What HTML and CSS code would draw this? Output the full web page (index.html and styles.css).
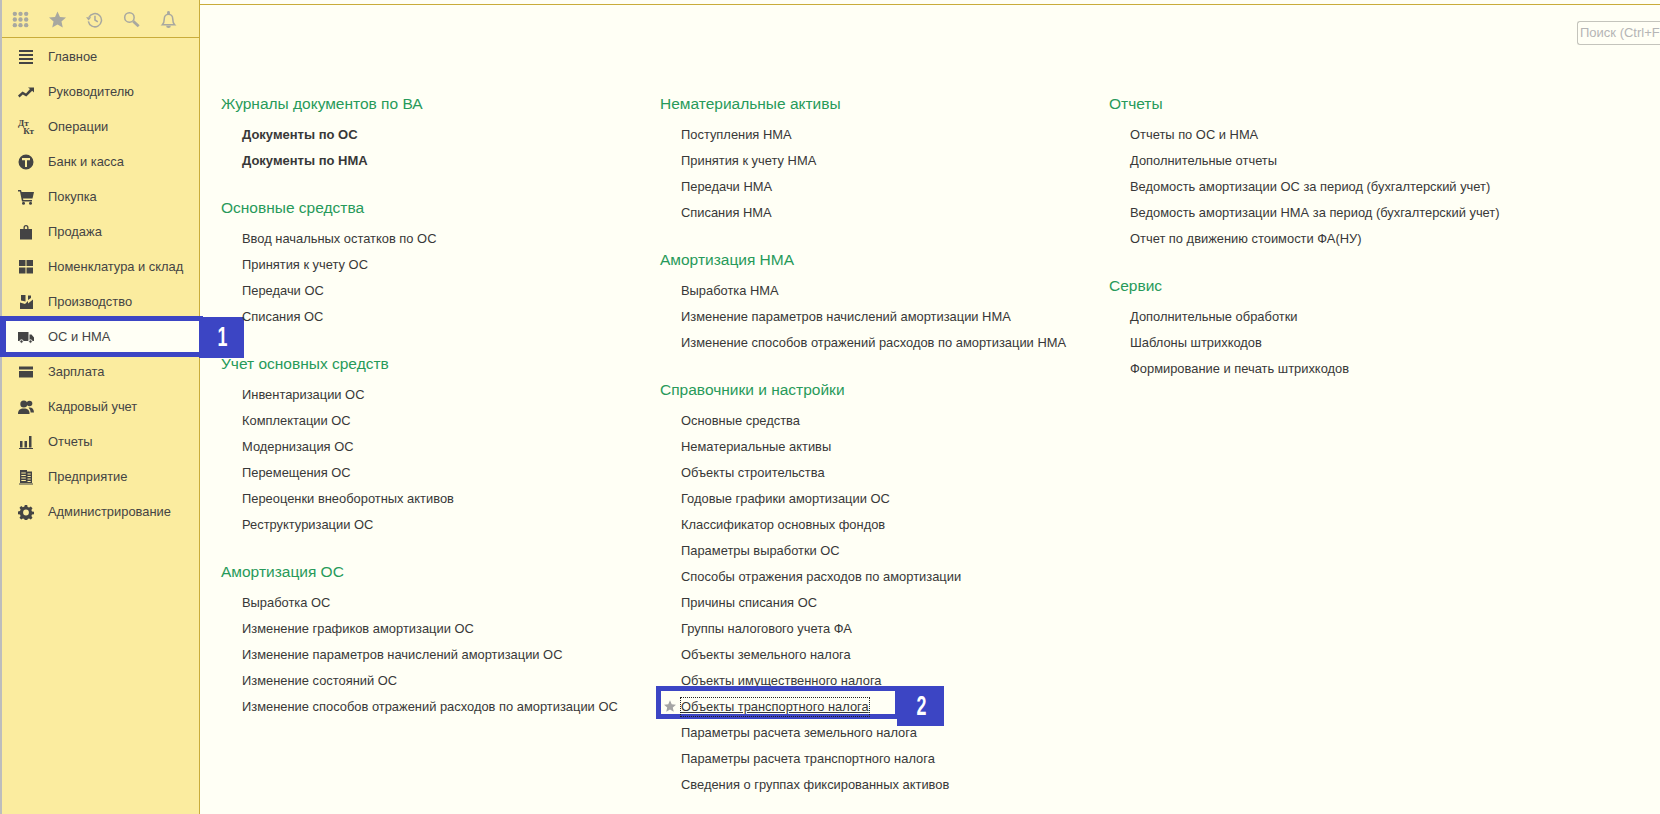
FILE: index.html
```html
<!DOCTYPE html>
<html lang="ru">
<head>
<meta charset="utf-8">
<title>ОС и НМА</title>
<link rel="stylesheet" href="styles.css">
</head>
<body>
<div class="app">
  <aside class="sidebar">
    <div class="toolbar">
      <svg class="tool" viewBox="0 0 18 18"><g class="grey"><circle cx="3" cy="3" r="2.3"/><circle cx="9" cy="3" r="2.3"/><circle cx="15" cy="3" r="2.3"/><circle cx="3" cy="9" r="2.3"/><circle cx="9" cy="9" r="2.3"/><circle cx="15" cy="9" r="2.3"/><circle cx="3" cy="15" r="2.3"/><circle cx="9" cy="15" r="2.3"/><circle cx="15" cy="15" r="2.3"/></g></svg>
      <svg class="tool" viewBox="0 0 18 18"><path class="grey" d="M9 .5l2.600 5.900 6.400.6-4.800 4.200 1.400 6.300L9 14.200l-5.600 3.300 1.400-6.300L0 7l6.400-.6z"/></svg>
      <svg class="tool" viewBox="0 0 18 18"><g class="grey-line"><path d="M3.200 6.500A7 7 0 1 1 2.500 11"/><path d="M9.500 5v4.500l3 2"/></g><path class="grey" d="M0 6.500h5.500L2.800 10z"/></svg>
      <svg class="tool" viewBox="0 0 18 18"><g class="grey-line"><circle cx="6.800" cy="6.800" r="5"/><path d="M10.800 10.800l5.800 5.400" stroke-width="3"/></g></svg>
      <svg class="tool" viewBox="0 0 18 18"><g class="grey-line"><path d="M2.500 14.500c1.500-1.500 2-2.500 2-6 0-3 2-5 4.500-5s4.500 2 4.500 5c0 3.500.5 4.500 2 6z"/></g><path class="grey" d="M7.500 1.500a1.500 1.500 0 0 1 3 0v2h-3zM6.500 15.500h5a2.500 2.500 0 0 1-5 0z"/></svg>
    </div>
    <ul class="nav">
      <li class="nav-item"><svg class="ico" viewBox="0 0 16 16"><path d="M1 1h14v2H1zM1 5h14v2H1zM1 9h14v2H1zM1 13h14v2H1z"/></svg>Главное</li>
      <li class="nav-item"><svg class="ico" viewBox="0 0 16 16"><path d="M0 11.500l4.500-4 3.500 2 4-4.500-2-1.500h6v5l-1.800-1.800L8.300 12.500l-3.500-2L1.500 13.500z"/></svg>Руководителю</li>
      <li class="nav-item"><span class="dtkt"><b>Дт</b><b class="kt">Кт</b></span>Операции</li>
      <li class="nav-item"><svg class="ico" viewBox="0 0 16 16"><path fill-rule="evenodd" d="M8 .5a7.500 7.500 0 1 1 0 15 7.500 7.500 0 0 1 0-15zM4 4v2.300h3V13h2V6.300h3V4z"/></svg>Банк и касса</li>
      <li class="nav-item"><svg class="ico" viewBox="0 0 16 16"><path d="M0 1h3l.6 2H16l-1.500 6.500H5l.3 1.500H14v1.500H4L2 2.500H0z"/><circle cx="5.500" cy="14.300" r="1.500"/><circle cx="12.500" cy="14.300" r="1.500"/></svg>Покупка</li>
      <li class="nav-item"><svg class="ico" viewBox="0 0 16 16"><path fill-rule="evenodd" d="M2 5h3.500V3.500a2.500 2.500 0 0 1 5 0V5H14v10.500H2zM6.800 5h2.400V3.500a1.200 1.200 0 0 0-2.400 0z"/></svg>Продажа</li>
      <li class="nav-item"><svg class="ico" viewBox="0 0 16 16"><path d="M1 1h6.500v6H1zM8.500 1H15v6H8.500zM1 8.500h6.500v6H1zM8.500 8.500H15v6H8.500z"/></svg>Номенклатура и склад</li>
      <li class="nav-item"><svg class="ico" viewBox="0 0 16 16"><path d="M2 15V8.500l5 1.500 3-3v2.500l5-4V15z"/><path d="M3 1h4.500v6.500L3 6.500zM10 1.500h3v2.500l-3 2z"/></svg>Производство</li>
      <li class="nav-item is-active">
        <svg class="ico" viewBox="0 0 16 16"><path d="M0 3h10.500v9H0zM11.500 5.500h2L16 8.500V12h-4.500z"/><circle cx="3.500" cy="12.500" r="1.700" class="hole"/><circle cx="12.500" cy="12.500" r="1.700" class="hole"/></svg>ОС и НМА
        <span class="frame frame-nav"></span>
        <span class="tag tag-nav"><span class="digit">1</span></span>
      </li>
      <li class="nav-item"><svg class="ico" viewBox="0 0 16 16"><path d="M1 2.500h14v3H1zM1 7h14v6.500H1z"/></svg>Зарплата</li>
      <li class="nav-item"><svg class="ico" viewBox="0 0 16 16"><circle cx="5.800" cy="5" r="3.500"/><path d="M0 15c0-4 2-5.500 5.800-5.500s5.800 1.500 5.800 5.500z"/><circle cx="11.500" cy="4.500" r="2.800"/><path d="M10.500 8.500c3.500-.5 5.500 1.500 5.500 5h-3.400c0-2-.8-3.500-2.100-5z"/></svg>Кадровый учет</li>
      <li class="nav-item"><svg class="ico" viewBox="0 0 16 16"><path d="M2 7h2.500v6.500H2zM6.500 7h2.500v6.500H6.500zM11 2h2.500v11.500H11zM1 14h14v1H1z"/></svg>Отчеты</li>
      <li class="nav-item"><svg class="ico" viewBox="0 0 16 16"><path fill-rule="evenodd" d="M2 1h7v1.500h5V14H2zM3.300 3.500v1h4.500v-1zM3.300 6v1h4.500V6zM3.300 8.500v1h4.500v-1zM3.300 11v1h4.500v-1zM9.500 4.500v1h3.200v-1zM9.500 7v1h3.200V7zM9.500 9.500v1h3.200v-1zM9.500 12v1h3.200v-1zM1 14.500h14v1H1z"/></svg>Предприятие</li>
      <li class="nav-item"><svg class="ico" viewBox="0 0 16 16"><path fill-rule="evenodd" d="M6.800 1h2.400l.4 2 1.500.6 1.700-1.100 1.700 1.700-1.100 1.700.6 1.500 2 .4v2.400l-2 .4-.6 1.500 1.100 1.700-1.700 1.700-1.700-1.100-1.500.6-.4 2H6.800l-.4-2-1.500-.6-1.700 1.100-1.700-1.700 1.100-1.700-.6-1.500-2-.4V7.400l2-.4.6-1.500-1.100-1.700 1.700-1.700 1.700 1.100 1.500-.6zM8 5.600a2.900 2.900 0 1 0 0 5.800 2.900 2.900 0 0 0 0-5.800z"/></svg>Администрирование</li>
    </ul>
  </aside>

  <main class="main">
    <div class="search-row"><div class="search">Поиск (Ctrl+F</div></div>
    <div class="columns">
      <div class="col col-1">
        <section class="group">
          <h2>Журналы документов по ВА</h2>
          <ul>
            <li class="strong">Документы по ОС</li>
            <li class="strong">Документы по НМА</li>
          </ul>
        </section>
        <section class="group">
          <h2>Основные средства</h2>
          <ul>
            <li>Ввод начальных остатков по ОС</li>
            <li>Принятия к учету ОС</li>
            <li>Передачи ОС</li>
            <li>Списания ОС</li>
          </ul>
        </section>
        <section class="group">
          <h2>Учет основных средств</h2>
          <ul>
            <li>Инвентаризации ОС</li>
            <li>Комплектации ОС</li>
            <li>Модернизация ОС</li>
            <li>Перемещения ОС</li>
            <li>Переоценки внеоборотных активов</li>
            <li>Реструктуризации ОС</li>
          </ul>
        </section>
        <section class="group">
          <h2>Амортизация ОС</h2>
          <ul>
            <li>Выработка ОС</li>
            <li>Изменение графиков амортизации ОС</li>
            <li>Изменение параметров начислений амортизации ОС</li>
            <li>Изменение состояний ОС</li>
            <li>Изменение способов отражений расходов по амортизации ОС</li>
          </ul>
        </section>
      </div>
      <div class="col col-2">
        <section class="group">
          <h2>Нематериальные активы</h2>
          <ul>
            <li>Поступления НМА</li>
            <li>Принятия к учету НМА</li>
            <li>Передачи НМА</li>
            <li>Списания НМА</li>
          </ul>
        </section>
        <section class="group">
          <h2>Амортизация НМА</h2>
          <ul>
            <li>Выработка НМА</li>
            <li>Изменение параметров начислений амортизации НМА</li>
            <li>Изменение способов отражений расходов по амортизации НМА</li>
          </ul>
        </section>
        <section class="group">
          <h2>Справочники и настройки</h2>
          <ul>
            <li>Основные средства</li>
            <li>Нематериальные активы</li>
            <li>Объекты строительства</li>
            <li>Годовые графики амортизации ОС</li>
            <li>Классификатор основных фондов</li>
            <li>Параметры выработки ОС</li>
            <li>Способы отражения расходов по амортизации</li>
            <li>Причины списания ОС</li>
            <li>Группы налогового учета ФА</li>
            <li>Объекты земельного налога</li>
            <li>Объекты имущественного налога</li>
            <li class="marked">
              <span class="frame frame-link"></span>
              <span class="tag tag-link"><span class="digit">2</span></span>
              <svg class="mark-star" viewBox="0 0 18 18"><path d="M9 .5l2.600 5.900 6.400.6-4.800 4.200 1.400 6.300L9 14.200l-5.600 3.300 1.400-6.300L0 7l6.400-.6z"/></svg>
              <span class="focus">Объекты транспортного налога</span>
            </li>
            <li>Параметры расчета земельного налога</li>
            <li>Параметры расчета транспортного налога</li>
            <li>Сведения о группах фиксированных активов</li>
          </ul>
        </section>
      </div>
      <div class="col col-3">
        <section class="group">
          <h2>Отчеты</h2>
          <ul>
            <li>Отчеты по ОС и НМА</li>
            <li>Дополнительные отчеты</li>
            <li>Ведомость амортизации ОС за период (бухгалтерский учет)</li>
            <li>Ведомость амортизации НМА за период (бухгалтерский учет)</li>
            <li>Отчет по движению стоимости ФА(НУ)</li>
          </ul>
        </section>
        <section class="group">
          <h2>Сервис</h2>
          <ul>
            <li>Дополнительные обработки</li>
            <li>Шаблоны штрихкодов</li>
            <li>Формирование и печать штрихкодов</li>
          </ul>
        </section>
      </div>
    </div>
  </main>
</div>
</body>
</html>
```
FILE: styles.css
```css
* { box-sizing: border-box; }
html, body { margin: 0; height: 100%; }
body {
  font-family: "Liberation Sans", Arial, sans-serif;
  font-size: 12.9px;
  color: #383838;
  background: #fffff5;
  overflow: hidden;
}
ul { list-style: none; margin: 0; padding: 0; }

.app { display: flex; height: 814px; }

.sidebar {
  flex: 0 0 200px;
  background: #fbec9f;
  border-left: 2px solid #bdbdbd;
  border-right: 1px solid #c9ac3a;
}
.toolbar {
  height: 38px;
  border-bottom: 1px solid #c9ac3a;
  display: flex;
  align-items: center;
  gap: 20px;
  padding: 2px 0 0 10px;
}
.tool { width: 17px; height: 17px; flex: none; }
.grey { fill: #a8a8a0; }
.grey-line { fill: none; stroke: #a8a8a0; stroke-width: 1.6; }

.nav { padding-top: 1px; }
.nav-item {
  position: relative;
  height: 35px;
  display: flex;
  align-items: center;
  gap: 14px;
  padding-left: 16px;
  color: #444;
}
.ico { width: 16px; height: 16px; flex: none; fill: #444; }
.hole { stroke: #fffff5; stroke-width: 1; }
.dtkt {
  width: 16px;
  height: 16px;
  flex: none;
  display: flex;
  flex-direction: column;
  font-family: "Liberation Serif", serif;
  font-size: 9px;
  line-height: 8px;
  color: #444;
}
.kt { align-self: flex-end; }

.is-active { background: #fffff5; }
.frame {
  position: absolute;
  border: 5px solid #3c45c4;
  pointer-events: none;
}
.frame-nav { left: -2px; right: -4px; top: -3px; bottom: -3px; border-left-width: 6px; border-right-width: 0; }
.tag {
  position: absolute;
  background: #3c45c4;
  color: #fff;
  font-weight: 700;
  font-size: 27px;
  display: flex;
  align-items: center;
  justify-content: center;
}
.digit { display: inline-block; transform: scaleX(.66); }
.tag-nav { left: 197px; top: -2px; width: 45px; height: 41px; padding-left: 2px; }

.main { flex: 1; min-width: 0; overflow: hidden; }
.main::before {
  content: "";
  display: block;
  height: 1px;
  margin-top: 4px;
  background: #c9ac3a;
}
.search-row {
  height: 88px;
  display: flex;
  justify-content: flex-end;
  padding-top: 16px;
}
.search {
  width: 83px;
  height: 24px;
  border: 1px solid #c4c4bc;
  border-right: 0;
  border-radius: 3px 0 0 3px;
  padding-left: 2px;
  line-height: 22px;
  font-size: 13px;
  color: #b5b5b5;
  white-space: nowrap;
  overflow: hidden;
}

.columns { display: flex; padding-left: 21px; }
.col-1 { flex: 0 0 439px; }
.col-2 { flex: 0 0 449px; }
.col-3 { flex: 1; }

.group { margin-bottom: 23px; }
.group h2 {
  margin: 0 0 8px;
  font-size: 15.5px;
  line-height: 21px;
  font-weight: 400;
  color: #279a5a;
  white-space: nowrap;
}
.group li {
  position: relative;
  height: 26px;
  line-height: 26px;
  padding-left: 21px;
  white-space: nowrap;
}
.group li.strong { font-weight: 700; font-size: 13px; }

.focus {
  position: relative;
  display: inline-block;
  height: 20px;
  line-height: 18px;
  border: 1px dotted #222;
  margin-left: -1px;
  text-decoration: underline;
}
.mark-star {
  position: absolute;
  left: 4px;
  top: 6px;
  width: 12px;
  height: 12px;
  fill: #a5a5a5;
}
.frame-link { left: -4px; top: -8px; width: 244px; height: 33px; }
.tag-link { left: 237px; top: -8px; width: 47px; height: 40px; padding-left: 3px; }
```
